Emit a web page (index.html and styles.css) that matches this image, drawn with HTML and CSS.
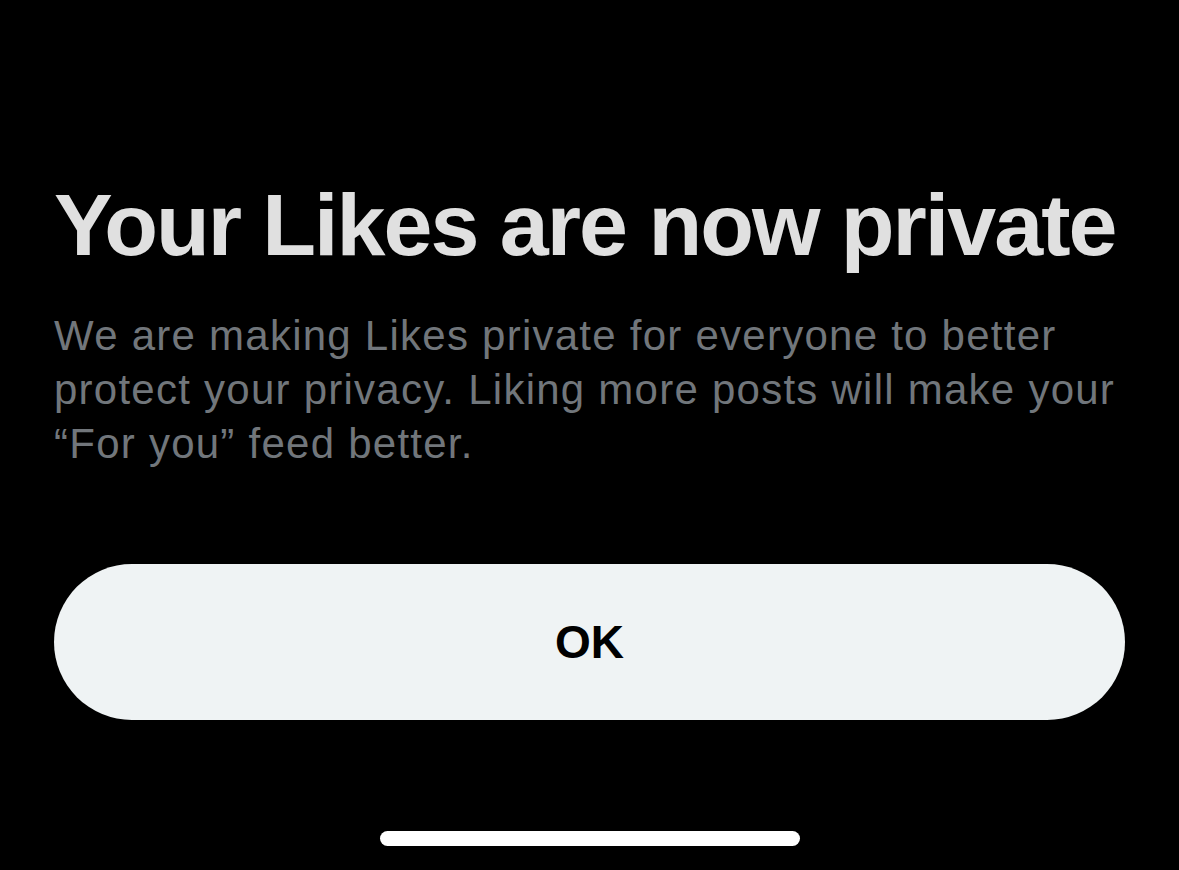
FILE: index.html
```html
<!DOCTYPE html>
<html lang="en">

<head>
  <meta charset="UTF-8">
  <meta name="viewport" content="width=device-width, initial-scale=1.0">
  <title>Likes</title>
  <link rel="stylesheet" href="styles.css">
</head>

<body>

  <div class="sheet">

    <!-- 标题 -->
    <h1 class="title">Your Likes are now private</h1>

    <!-- 说明文字 -->
    <p class="desc">We are making Likes private for everyone to better protect your privacy. Liking more posts will make your “For you” feed better.</p>

    <!-- 按钮 -->
    <button class="ok">OK</button>

  </div>

  <!-- 底部横条 -->
  <div class="home-bar"></div>

</body>

</html>
```

FILE: styles.css
```css
* {
  margin: 0;
  padding: 0;
  box-sizing: border-box;
}

body {
  width: 1179px;
  height: 870px;
  background-color: #000;
  font-family: "Liberation Sans", Arial, sans-serif;
  overflow: hidden;
  display: flex;
  flex-direction: column;
}

.sheet {
  display: flex;
  flex-direction: column;
  padding: 172px 54px 0 54px;
}

.title {
  font-size: 88px;
  line-height: 106px;
  font-weight: 700;
  color: #e0e0e0;
  letter-spacing: -2px;
  white-space: nowrap;
}

.desc {
  margin-top: 31px;
  font-size: 42px;
  line-height: 54px;
  color: #71767b;
  letter-spacing: 1.25px;
}

.ok {
  margin-top: 93px;
  height: 156px;
  width: 100%;
  border: none;
  border-radius: 78px;
  background-color: #eff3f4;
  color: #000;
  font-family: "Liberation Sans", Arial, sans-serif;
  font-size: 46px;
  font-weight: 700;
}

.home-bar {
  margin: auto auto 24px auto;
  width: 420px;
  height: 15px;
  border-radius: 8px;
  background-color: #fff;
}
```
